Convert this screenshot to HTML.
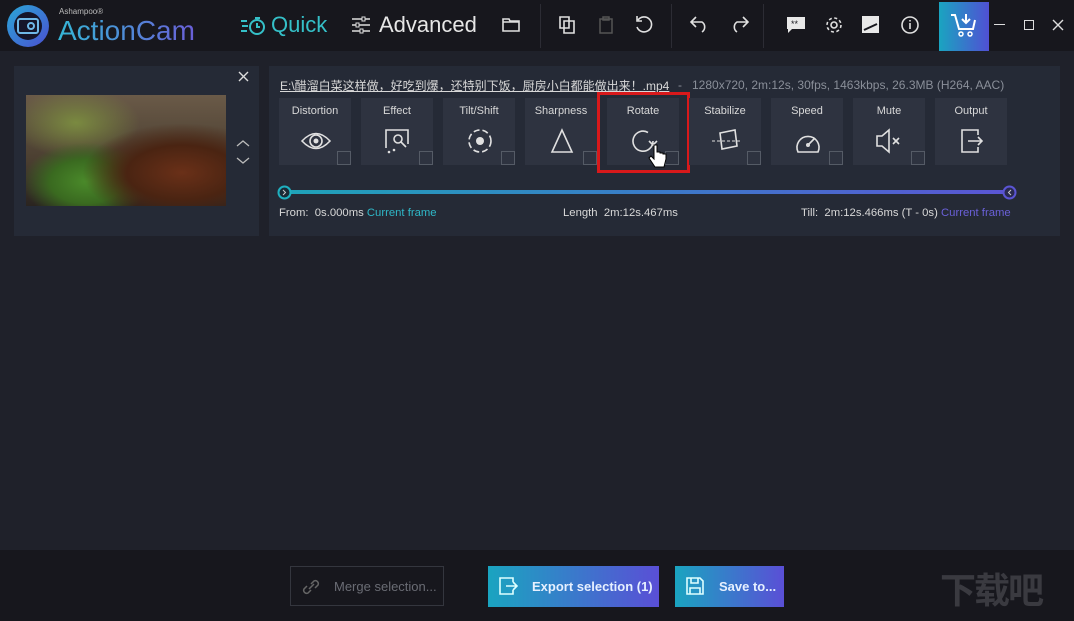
<!DOCTYPE html>
<html><head><meta charset="utf-8"><style>
*{margin:0;padding:0;box-sizing:border-box}
body{width:1074px;height:621px;overflow:hidden;background:#1f212a;font-family:"Liberation Sans","Noto Sans CJK SC",sans-serif;position:relative;color:#ddd}
.abs{position:absolute}
.top{left:0;top:0;width:1074px;height:51px;background:#17171d}
.bot{left:0;top:550px;width:1074px;height:71px;background:#17171d}
.panel{background:#252a36}
.tile{position:absolute;top:98px;width:72px;height:67px;background:#2e3340}
.tile .t{position:absolute;top:7px;width:100%;text-align:center;font-size:11px;color:#d8d8d8}
.tile .cb{position:absolute;right:0;bottom:0;width:14px;height:14px;border:1px solid #555b66}
.tile svg{position:absolute;left:22px;top:30px}
.sep{top:4px;width:1px;height:44px;background:#2c2c34}
.ic{stroke:#e0e0e0;fill:none;stroke-width:1.6}
</style></head><body>
<div class="abs top"></div>
<svg class="abs" style="left:6px;top:4px" width="46" height="44"><defs><linearGradient id="lg" x1="0" y1="0" x2="1" y2="1"><stop offset="0" stop-color="#2aa8d8"/><stop offset="1" stop-color="#4a4fd0"/></linearGradient></defs><circle cx="22" cy="22" r="21" fill="url(#lg)"/><circle cx="22" cy="22" r="14" fill="#15152a"/><rect x="12" y="15" width="20" height="14" rx="2" fill="none" stroke="#6fb8e8" stroke-width="2"/><circle cx="25" cy="22" r="3" fill="none" stroke="#6fb8e8" stroke-width="2"/></svg>
<div class="abs" style="left:59px;top:7px;font-size:8px;color:#bbb">Ashampoo®</div>
<div class="abs" style="left:58px;top:15px;font-size:28px;background:linear-gradient(90deg,#35b6d6,#6a5fd8);-webkit-background-clip:text;color:transparent;line-height:32px">ActionCam</div>
<svg class="abs" style="left:240px;top:16px" width="28" height="20"><path d="M1 5h6M2 10h6M1 15h6" stroke="#35c0c8" stroke-width="2"/><circle cx="17" cy="11" r="7" fill="none" stroke="#35c0c8" stroke-width="2"/><path d="M17 7v4h3M15 2h5" stroke="#35c0c8" stroke-width="2" fill="none"/></svg>
<div class="abs" style="left:271px;top:12px;font-size:22px;color:#35c0c8">Quick</div>
<svg class="abs" style="left:351px;top:16px" width="20" height="18"><path d="M1 3h18M1 9h18M1 15h18" stroke="#ddd" stroke-width="1.5"/><rect x="11" y="1" width="3" height="4" fill="#17171d" stroke="#ddd"/><rect x="5" y="7" width="3" height="4" fill="#17171d" stroke="#ddd"/><rect x="9" y="13" width="3" height="4" fill="#17171d" stroke="#ddd"/></svg>
<div class="abs" style="left:379px;top:12px;font-size:22px;color:#e6e6e6">Advanced</div>
<svg class="abs" style="left:502px;top:17px" width="18" height="15"><path class="ic" d="M1 2h6l1 2h9v10H1z M1 5h16"/></svg>
<div class="abs sep" style="left:540px"></div>
<svg class="abs" style="left:559px;top:16px" width="18" height="18"><path class="ic" d="M1 1h9v11H1z M5 5h10v12H5z"/></svg>
<svg class="abs" style="left:598px;top:16px" width="16" height="18"><path d="M2 3h12v14H2z M5 1h6v3H5z" stroke="#555" fill="none" stroke-width="1.5"/></svg>
<svg class="abs" style="left:634px;top:15px" width="20" height="20"><path class="ic" d="M4 5A7.5 7.5 0 1 1 3 12 M3 1v5h5"/></svg>
<div class="abs sep" style="left:671px"></div>
<svg class="abs" style="left:690px;top:15px" width="20" height="18"><path class="ic" d="M6 2L1 7l5 5M1 7h11a6 6 0 0 1 0 10"/></svg>
<svg class="abs" style="left:729px;top:15px" width="20" height="18"><path class="ic" d="M14 2l5 5-5 5M19 7H8a6 6 0 0 0 0 10"/></svg>
<div class="abs sep" style="left:763px"></div>
<svg class="abs" style="left:786px;top:16px" width="20" height="18"><path d="M1 1h18v12H6l-4 4v-4H1z" fill="#e8e8e8"/><text x="5" y="11" font-size="9" fill="#17171d">**</text></svg>
<svg class="abs" style="left:824px;top:15px" width="20" height="20"><circle cx="10" cy="10" r="3" class="ic"/><circle cx="10" cy="10" r="7" class="ic" stroke-dasharray="3 2.5"/></svg>
<svg class="abs" style="left:862px;top:16px" width="18" height="18"><rect width="17" height="17" fill="#e8e8e8"/><path d="M2 14L15 8" stroke="#17171d" stroke-width="2"/></svg>
<svg class="abs" style="left:900px;top:15px" width="20" height="20"><circle cx="10" cy="10" r="8" class="ic"/><path d="M10 8v6M10 5v1.5" class="ic"/></svg>
<div class="abs" style="left:939px;top:2px;width:50px;height:49px;background:linear-gradient(90deg,#1aa4c0,#5050d4)"></div>
<svg class="abs" style="left:950px;top:13px" width="28" height="26"><path d="M1 2h4l4 14h14l2-9" stroke="#fff" stroke-width="2" fill="none"/><path d="M16 1v8M12 6l4 4 4-4" stroke="#fff" stroke-width="2" fill="none"/><circle cx="11" cy="21" r="2" stroke="#fff" fill="none" stroke-width="1.5"/><circle cx="20" cy="21" r="2" stroke="#fff" fill="none" stroke-width="1.5"/></svg>
<div class="abs" style="left:994px;top:24px;width:11px;height:1px;background:#ddd"></div>
<div class="abs" style="left:1024px;top:20px;width:10px;height:10px;border:1px solid #ddd"></div>
<svg class="abs" style="left:1052px;top:19px" width="12" height="12"><path d="M1 1l10 10M11 1L1 11" stroke="#ddd" stroke-width="1.4"/></svg>

<div class="abs panel" style="left:14px;top:66px;width:245px;height:170px"></div>
<div class="abs" style="left:26px;top:95px;width:200px;height:111px;background:radial-gradient(ellipse at 78% 70%,#6a3018 0,#4a2412 25%,transparent 45%),radial-gradient(ellipse at 30% 78%,#4a8a2a 0,#3a6a20 18%,transparent 32%),radial-gradient(ellipse at 25% 25%,#7a8a40 0,transparent 30%),linear-gradient(180deg,#6a5a48,#4a3e30 60%,#2a2420)"></div>
<svg class="abs" style="left:238px;top:71px" width="11" height="11"><path d="M1 1l9 9M10 1L1 10" stroke="#ddd" stroke-width="1.4"/></svg>
<svg class="abs" style="left:236px;top:138px" width="14" height="30"><path d="M1 8l6-5 6 5M1 20l6 5 6-5" stroke="#bbb" fill="none" stroke-width="1.3"/></svg>

<div class="abs panel" style="left:269px;top:66px;width:791px;height:170px"></div>
<div class="abs" style="left:280px;top:77px;font-size:12px;color:#d8d8d8;text-decoration:underline">E:\醋溜白菜这样做，好吃到爆，还特别下饭，厨房小白都能做出来！.mp4</div>
<div class="abs" style="left:678px;top:78px;font-size:12px;color:#8a8f99">-&nbsp;&nbsp; 1280x720, 2m:12s, 30fps, 1463kbps, 26.3MB (H264, AAC)</div>

<div class="tile" style="left:279px"><div class="t">Distortion</div><svg width="30" height="26"><path class="ic" d="M1 13Q15 -2 29 13Q15 28 1 13z"/><circle cx="15" cy="13" r="6" class="ic"/><circle cx="15" cy="13" r="2.5" fill="#e0e0e0"/></svg><div class="cb"></div></div>
<div class="tile" style="left:361px"><div class="t">Effect</div><svg width="30" height="26"><path class="ic" d="M3 20V2h22v14"/><circle cx="15" cy="11" r="4" class="ic"/><path class="ic" d="M18 14l5 5"/><circle cx="6" cy="24" r="1.3" fill="#ddd"/><circle cx="11" cy="22" r="1.3" fill="#ddd"/></svg><div class="cb"></div></div>
<div class="tile" style="left:443px"><div class="t">Tilt/Shift</div><svg width="30" height="26"><circle cx="15" cy="13" r="11" class="ic" stroke-dasharray="6 3"/><circle cx="15" cy="13" r="4" fill="#e0e0e0"/></svg><div class="cb"></div></div>
<div class="tile" style="left:525px"><div class="t">Sharpness</div><svg width="30" height="26"><path class="ic" d="M15 2L5 24h20z"/></svg><div class="cb"></div></div>
<div class="tile" style="left:607px"><div class="t">Rotate</div><svg width="30" height="26"><path class="ic" d="M24 13A10 10 0 1 1 19 4.5 M20 13l4 4 4-4"/></svg><div class="cb"></div></div>
<svg class="abs" style="left:648px;top:143px" width="20" height="28"><path d="M6 2v14l-3-3-2 2 6 9h9l2-8v-5h-3v-1h-3v-1h-3V2z" fill="#fff" stroke="#000" stroke-width="1"/></svg>
<div class="abs" style="left:597px;top:92px;width:93px;height:81px;border:3px solid #d8191b"></div>
<div class="tile" style="left:689px"><div class="t">Stabilize</div><svg width="32" height="26"><path class="ic" d="M9 5l15-3 2 16-15 3z"/><path d="M1 13h30" stroke="#ddd" stroke-dasharray="3 2"/></svg><div class="cb"></div></div>
<div class="tile" style="left:771px"><div class="t">Speed</div><svg width="30" height="26"><path class="ic" d="M5 24A11 11 0 1 1 25 24z"/><path class="ic" d="M15 17l7-7"/><circle cx="15" cy="17" r="2" fill="#ddd"/></svg><div class="cb"></div></div>
<div class="tile" style="left:853px"><div class="t">Mute</div><svg width="30" height="26"><path class="ic" d="M2 8h5l7-6v22l-7-6H2z M18 10l6 6M24 10l-6 6"/></svg><div class="cb"></div></div>
<div class="tile" style="left:935px"><div class="t">Output</div><svg width="30" height="26"><path class="ic" d="M21 7V2H5v22h16v-5M11 13h14M21 9l4 4-4 4"/></svg></div>

<div class="abs" style="left:284px;top:190px;width:726px;height:4px;background:linear-gradient(90deg,#1fa3b8,#3a7cc8 50%,#5b55d4)"></div>
<svg class="abs" style="left:277px;top:185px" width="15" height="15"><circle cx="7.5" cy="7.5" r="6" fill="#1a2a36" stroke="#1fb0c0" stroke-width="2"/><path d="M6 5l2.5 2.5L6 10" stroke="#ccc" fill="none"/></svg>
<svg class="abs" style="left:1002px;top:185px" width="15" height="15"><circle cx="7.5" cy="7.5" r="6" fill="#2a2a50" stroke="#5b55d4" stroke-width="2"/><path d="M9 5L6.5 7.5 9 10" stroke="#ccc" fill="none"/></svg>
<div class="abs" style="left:279px;top:207px;font-size:11.3px;color:#d8d8d8">From:&nbsp; 0s.000ms <span style="color:#2fb8c8">Current frame</span></div>
<div class="abs" style="left:563px;top:207px;font-size:11.3px;color:#d8d8d8">Length&nbsp; 2m:12s.467ms</div>
<div class="abs" style="left:801px;top:207px;font-size:11.3px;color:#d8d8d8">Till:&nbsp; 2m:12s.466ms (T - 0s) <span style="color:#6a60d8">Current frame</span></div>

<div class="abs bot"></div>
<div class="abs" style="left:290px;top:566px;width:154px;height:40px;border:1px solid #34363e"></div>
<svg class="abs" style="left:300px;top:576px" width="22" height="22"><path d="M9 13l5-5M7 10l-3 3a3 3 0 0 0 4 4l3-3M15 12l3-3a3 3 0 0 0-4-4l-3 3" stroke="#666" fill="none" stroke-width="1.5"/></svg>
<div class="abs" style="left:334px;top:579px;font-size:13px;color:#6a6c74">Merge selection...</div>
<div class="abs" style="left:488px;top:566px;width:171px;height:41px;background:linear-gradient(90deg,#1aa4c0,#5a4fd6)"></div>
<svg class="abs" style="left:498px;top:576px" width="20" height="20"><path d="M15 6V2H2v16h13v-4M8 10h11M15 6l4 4-4 4" stroke="#dff" fill="none" stroke-width="1.6"/></svg>
<div class="abs" style="left:532px;top:579px;font-size:13px;font-weight:bold;color:#e6f0ff">Export selection (1)</div>
<div class="abs" style="left:675px;top:566px;width:109px;height:41px;background:linear-gradient(90deg,#1aa4c0,#5a4fd6)"></div>
<svg class="abs" style="left:685px;top:576px" width="20" height="20"><path d="M2 2h13l3 3v13H2z M6 2v5h7V2 M5 18v-6h10v6" stroke="#dff" fill="none" stroke-width="1.6"/></svg>
<div class="abs" style="left:719px;top:579px;font-size:13px;font-weight:bold;color:#e6f0ff">Save to...</div>
<div class="abs" style="left:940px;top:562px;font-size:36px;color:#3a3a40;font-weight:bold;letter-spacing:-2px">下载吧</div>
</body></html>
